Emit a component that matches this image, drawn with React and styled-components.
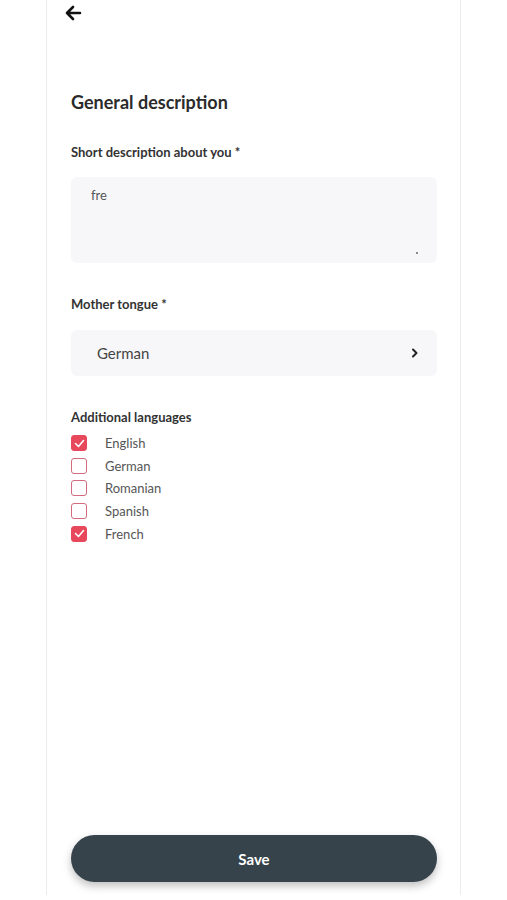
import React from 'react';
import styled, { createGlobalStyle } from 'styled-components';

const Global = createGlobalStyle`
  body {
    margin: 0;
    background: #ffffff;
    font-family: Lato, "Open Sans", sans-serif;
  }
`;

const Frame = styled.div`
  width: 366px;
  height: 882px;
  margin: 0 auto;
  border-left: 1px solid #ececec;
  border-right: 1px solid #ececec;
  display: flex;
  flex-direction: column;
  padding: 0 23px 13px 24px;
`;

const Back = styled.button`
  border: 0;
  background: none;
  padding: 0;
  margin: 3px 0 0 -8px;
  width: 20px;
  height: 20px;
  display: flex;
  align-items: center;
  justify-content: center;
  cursor: pointer;
`;

const Heading = styled.h1`
  margin: 67px 0 0;
  font-size: 18px;
  font-weight: 700;
  color: #2b2b2b;
  line-height: 24px;
`;

const Label = styled.div`
  margin-top: ${p => p.$top}px;
  font-size: 13px;
  font-weight: 700;
  color: #333333;
  line-height: 16px;
`;

const TextArea = styled.div`
  margin-top: 17px;
  height: 86px;
  background: #f7f7fa;
  border-radius: 6px;
  position: relative;
  padding: 10px 20px;
  box-sizing: border-box;
  font-size: 13px;
  color: #555;
`;

const Dot = styled.span`
  position: absolute;
  right: 19px;
  bottom: 9px;
  width: 2px;
  height: 2px;
  background: #666;
  border-radius: 1px;
`;

const Select = styled.div`
  margin-top: 18px;
  height: 46px;
  background: #f7f7fa;
  border-radius: 6px;
  display: flex;
  align-items: center;
  justify-content: space-between;
  padding: 0 18px 0 26px;
  font-size: 15px;
  color: #444;
`;

const List = styled.div`
  margin-top: 10px;
  display: flex;
  flex-direction: column;
  gap: 6.7px;
`;

const Row = styled.label`
  display: flex;
  align-items: center;
  height: 16px;
  font-size: 13px;
  color: #555;
`;

const Box = styled.span`
  width: 16px;
  height: 16px;
  box-sizing: border-box;
  border-radius: 3px;
  border: 1.5px solid ${p => (p.$checked ? '#e8485b' : '#d46a7d')};
  background: ${p => (p.$checked ? '#e8485b' : '#fff')};
  display: flex;
  align-items: center;
  justify-content: center;
  margin-right: 18px;
`;

const SaveButton = styled.button`
  margin-top: auto;
  height: 47px;
  border: 0;
  border-radius: 24px;
  background: #36434a;
  color: #fff;
  font-family: Lato, sans-serif;
  font-size: 15px;
  font-weight: 700;
  box-shadow: 0 4px 8px rgba(0, 0, 0, 0.25);
  cursor: pointer;
`;

const languages = [
  { name: 'English', checked: true },
  { name: 'German', checked: false },
  { name: 'Romanian', checked: false },
  { name: 'Spanish', checked: false },
  { name: 'French', checked: true },
];

export default function App() {
  return (
    <>
      <Global />
      <Frame>
        <Back aria-label="Back">
          <svg width="18" height="16" viewBox="0 0 18 16" fill="none">
            <path d="M16 8H3M9 2L3 8l6 6" stroke="#111" strokeWidth="2.6" strokeLinecap="round" strokeLinejoin="round" />
          </svg>
        </Back>
        <Heading>General description</Heading>
        <Label $top={30}>Short description about you *</Label>
        <TextArea>
          fre
          <Dot />
        </TextArea>
        <Label $top={33}>Mother tongue *</Label>
        <Select>
          <span>German</span>
          <svg width="8" height="10" viewBox="0 0 8 10">
            <path d="M2 1.5L5.5 5 2 8.5" stroke="#222" strokeWidth="2" fill="none" strokeLinecap="round" strokeLinejoin="round" />
          </svg>
        </Select>
        <Label $top={33}>Additional languages</Label>
        <List>
          {languages.map(l => (
            <Row key={l.name}>
              <Box $checked={l.checked}>
                {l.checked && (
                  <svg width="11" height="9" viewBox="0 0 11 9">
                    <path d="M1.5 4.5l3 3 5-6" stroke="#fff" strokeWidth="1.6" fill="none" strokeLinecap="round" strokeLinejoin="round" />
                  </svg>
                )}
              </Box>
              {l.name}
            </Row>
          ))}
        </List>
        <SaveButton>Save</SaveButton>
      </Frame>
    </>
  );
}
